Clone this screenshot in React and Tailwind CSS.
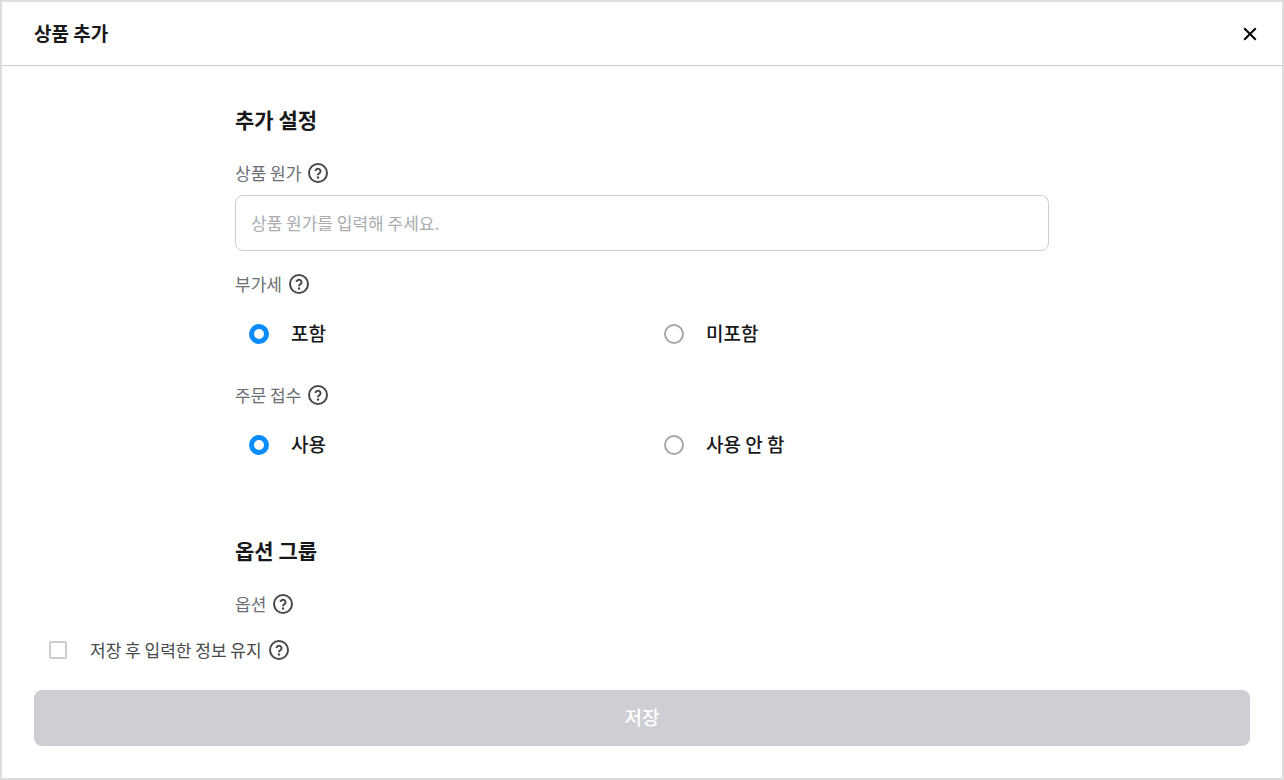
import React, { useState } from 'react';

const HelpIcon = () => (
    <svg width="20" height="20" viewBox="0 0 20 20" fill="none" stroke="#48494c" strokeWidth="2" aria-hidden="true">
        <circle cx="10" cy="10" r="9" />
        <path d="M7.5 8.1a2.5 2.4 0 1 1 4.3 1.7c-.9.8-1.8 1.1-1.8 2.5" />
        <circle cx="10" cy="14.5" r="1.2" fill="#48494c" stroke="none" />
    </svg>
);

// Label text with a help button next to it
const FieldLabel = ({ id, htmlFor, children }) => (
    <div className="flex items-center gap-[7px] h-6">
        {htmlFor ? (
            <label htmlFor={htmlFor} className="text-[17px] leading-6 text-[#6b6e75]">{children}</label>
        ) : (
            <span id={id} className="text-[17px] leading-6 text-[#6b6e75]">{children}</span>
        )}
        <button type="button" aria-label={`${children} 도움말`}>
            <HelpIcon />
        </button>
    </div>
);

const RadioField = ({ name, label, options }) => {
    const [value, setValue] = useState(options[0]);

    return (
        <div role="radiogroup" aria-labelledby={`${name}-label`} className="mt-[21px]">
            <FieldLabel id={`${name}-label`}>{label}</FieldLabel>
            <div className="grid grid-cols-2 gap-4 mt-[10px]">
                {options.map((option) => (
                    <label key={option} className="flex items-center gap-[22px] h-14 pl-[14px] text-[19px] font-medium text-[#17181a]">
                        <input
                            type="radio"
                            name={name}
                            value={option}
                            checked={value === option}
                            onChange={() => setValue(option)}
                            className="appearance-none size-5 rounded-full border-2 border-[#a6a6a6] bg-white checked:border-[5px] checked:border-[#0a8cff]"
                        />
                        <span className="pb-0.5">{option}</span>
                    </label>
                ))}
            </div>
        </div>
    );
};

const App = () => {
    const [cost, setCost] = useState('');
    const [keepInfo, setKeepInfo] = useState(false);

    return (
        <div
            role="dialog"
            aria-labelledby="dialog-title"
            className="flex flex-col h-screen border-2 border-[#dcdcdc] bg-white font-['Noto_Sans_CJK_KR',sans-serif] text-[#17181a]"
        >
            {/* Header */}
            <header className="flex items-center justify-between h-16 shrink-0 pl-8 pr-5 border-b border-[#cdced0]">
                <h1 id="dialog-title" className="pb-0.5 text-[19px] leading-7 font-bold">상품 추가</h1>
                <button type="button" aria-label="닫기" className="flex items-center justify-center size-6">
                    <svg width="14" height="14" viewBox="0 0 14 14" stroke="#000" strokeWidth="2" aria-hidden="true">
                        <path d="M1.2 1.2l11.6 11.6M12.8 1.2L1.2 12.8" />
                    </svg>
                </button>
            </header>

            {/* Form */}
            <main className="flex-1 min-h-0 overflow-y-auto pt-10">
                <div className="max-w-[814px] mx-auto">
                    <section>
                        <h2 className="mb-[29px] text-[21px] leading-[26px] font-bold">추가 설정</h2>
                        <FieldLabel htmlFor="cost">상품 원가</FieldLabel>
                        <input
                            id="cost"
                            type="text"
                            value={cost}
                            onChange={(e) => setCost(e.target.value)}
                            placeholder="상품 원가를 입력해 주세요."
                            className="block w-full h-14 mt-[10px] px-[15px] pb-0.5 rounded-lg border border-[#cdced0] text-[17px] placeholder:text-[#aaacb0]"
                        />
                        <RadioField name="tax" label="부가세" options={['포함', '미포함']} />
                        <RadioField name="order" label="주문 접수" options={['사용', '사용 안 함']} />
                    </section>

                    <section className="mt-16">
                        <h2 className="mb-[29px] text-[21px] leading-[26px] font-bold">옵션 그룹</h2>
                        <FieldLabel>옵션</FieldLabel>
                    </section>
                </div>
            </main>

            {/* Footer */}
            <footer className="shrink-0 px-8 pt-4 pb-8">
                <div className="flex items-center gap-[7px] h-6 pl-[15px]">
                    <label className="flex items-center gap-[23px] text-[17px] leading-6 text-[#48494c]">
                        <input
                            type="checkbox"
                            checked={keepInfo}
                            onChange={(e) => setKeepInfo(e.target.checked)}
                            className="appearance-none size-[18px] rounded-xs border-2 border-[#cdcdcd] bg-white checked:bg-[#0a8cff] checked:border-[#0a8cff]"
                        />
                        저장 후 입력한 정보 유지
                    </label>
                    <button type="button" aria-label="정보 유지 도움말">
                        <HelpIcon />
                    </button>
                </div>
                <button type="submit" disabled className="w-full h-14 mt-7 pb-0.5 rounded-lg bg-[#cecfd5] text-[19px] font-medium text-white">
                    저장
                </button>
            </footer>
        </div>
    );
};

export default App;
